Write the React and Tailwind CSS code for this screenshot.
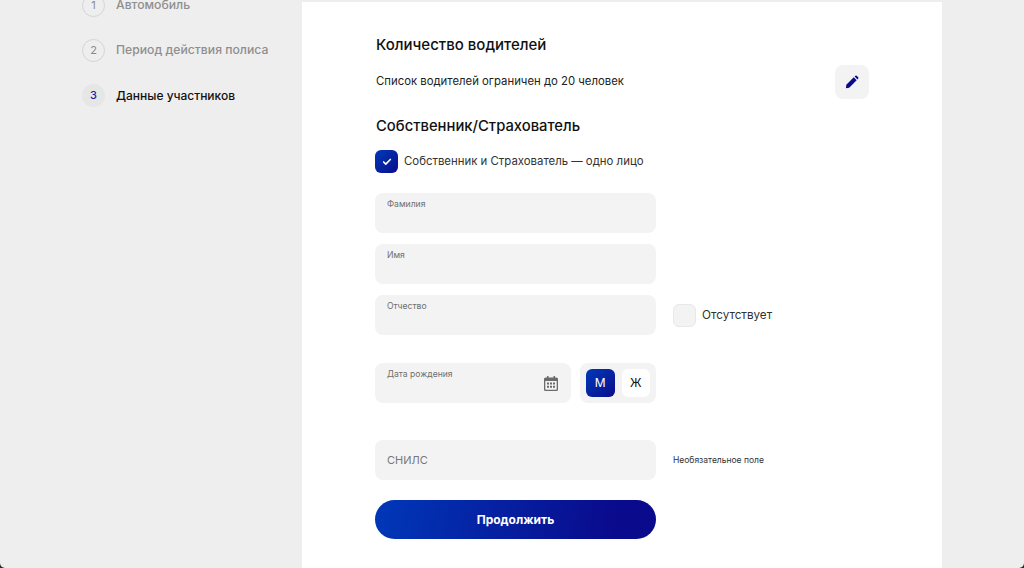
import { Check } from "lucide-react";

const steps = [
  { num: 1, label: "Автомобиль" },
  { num: 2, label: "Период действия полиса" },
  { num: 3, label: "Данные участников", active: true },
];

function Field({ label, className = "w-[281px]" }) {
  return (
    <div className={`h-10 rounded-lg bg-[#f3f3f3] px-[12px] pt-[5px] text-[8.6px] leading-[12px] text-[#6f6f6f] ${className}`}>
      {label}
    </div>
  );
}

function PencilIcon() {
  return (
    <svg width="14" height="14" viewBox="0 0 16 16" fill="#0a0a8c">
      <path d="M1.5 11.2 10 2.7l3.3 3.3-8.5 8.5-3.8.5z" />
      <path d="M11 1.7l.9-.8a1 1 0 0 1 1.4 0l1.8 1.8a1 1 0 0 1 0 1.4l-.8.9z" />
    </svg>
  );
}

function CalendarIcon() {
  return (
    <svg width="14" height="15" viewBox="0 0 14 15" fill="#6b6b6b">
      <path fillRule="evenodd" d="M3 0h1.5v1.5h5V0H11v1.5h1.5A1.5 1.5 0 0 1 14 3v10.5a1.5 1.5 0 0 1-1.5 1.5h-11A1.5 1.5 0 0 1 0 13.5V3a1.5 1.5 0 0 1 1.5-1.5H3zM1.3 5v8.2c0 .3.2.5.5.5h10.4c.3 0 .5-.2.5-.5V5z" />
      <path d="M3 6.5h2v2H3zM6 6.5h2v2H6zM9 6.5h2v2H9zM3 9.8h2v2H3zM6 9.8h2v2H6zM9 9.8h2v2H9z" />
    </svg>
  );
}

export default function App() {
  return (
    <div className="h-[568px] bg-[#2a2a2a]">
      <div className="flex h-[568px] overflow-hidden rounded-b-[5px] bg-[#eeeeee] font-['Inter',sans-serif]">
        {/* Steps */}
        <aside className="w-[302px] shrink-0 pl-[82px]">
          <div className="mt-[-6px] flex flex-col gap-[22px]">
            {steps.map((step) => (
              <div key={step.num} className="flex items-center gap-[11px]">
                <div
                  className={
                    step.active
                      ? "flex size-[23px] items-center justify-center rounded-full bg-[#e6e6e6] text-[11px] font-medium text-[#1a1aa0]"
                      : "flex size-[23px] items-center justify-center rounded-full border border-[#d4d4d4] text-[11px] text-[#8a8a8a]"
                  }
                >
                  {step.num}
                </div>
                <span
                  className={
                    step.active
                      ? "text-[12px] font-medium text-[#111111]"
                      : "text-[12.2px] font-medium text-[#8f8f8f]"
                  }
                >
                  {step.label}
                </span>
              </div>
            ))}
          </div>
        </aside>

        {/* Form */}
        <main className="mt-[2px] h-[566px] w-[640px] shrink-0 bg-white px-[73px]">
          <h2 className="mt-[34px] pl-px text-[15px] font-medium leading-[18px] text-[#111111]">
            Количество водителей
          </h2>
          <div className="mt-[11px] flex h-[34px] items-center justify-between">
            <p className="pl-px text-[11.35px] text-[#222222]">Список водителей ограничен до 20 человек</p>
            <button className="flex size-[34px] items-center justify-center rounded-lg bg-[#f3f3f3]">
              <PencilIcon />
            </button>
          </div>
          <h2 className="mt-[18px] pl-px text-[14.8px] font-medium leading-[18px] text-[#111111]">
            Собственник/Страхователь
          </h2>
          <div className="mt-[15px] flex items-center gap-[6px]">
            <div className="flex size-[23px] items-center justify-center rounded-md bg-gradient-to-br from-[#0038b8] to-[#0a0a8c]">
              <Check className="size-[10px] text-white" strokeWidth={4} />
            </div>
            <span className="text-[11.4px] text-[#333333]">Собственник и Страхователь — одно лицо</span>
          </div>

          <div className="mt-[20px] flex flex-col gap-[11px]">
            <Field label="Фамилия" />
            <Field label="Имя" />
            <div className="flex items-center gap-[17px]">
              <Field label="Отчество" />
              <div className="flex items-center gap-[6px]">
                <div className="size-[23px] rounded-md border border-[#e8e8e8] bg-[#f3f3f3]" />
                <span className="pt-px text-[11.7px] text-[#333333]">Отсутствует</span>
              </div>
            </div>
          </div>

          <div className="mt-[28px] flex w-[281px] justify-between">
            <div className="flex h-10 w-[196px] justify-between rounded-lg bg-[#f3f3f3] pl-[12px] pr-[13px] pt-[5px]">
              <span className="text-[8.6px] leading-[12px] text-[#6f6f6f]">Дата рождения</span>
              <div className="pt-[8px]">
                <CalendarIcon />
              </div>
            </div>
            <div className="flex h-10 w-[76px] items-center gap-[7px] rounded-lg bg-[#f3f3f3] px-[6px]">
              <div className="flex h-[28px] w-[29px] items-center justify-center rounded-md bg-gradient-to-br from-[#0038b8] to-[#0a0a8c] text-[12px] text-white">
                М
              </div>
              <div className="flex h-[28px] w-[29px] items-center justify-center rounded-md bg-white text-[12px] text-[#111111]">
                Ж
              </div>
            </div>
          </div>

          <div className="mt-[37px] flex items-center gap-[17px]">
            <div className="flex h-10 w-[281px] items-center rounded-lg bg-[#f3f3f3] px-[12px] text-[11px] text-[#777777]">
              СНИЛС
            </div>
            <span className="text-[8.5px] text-[#333333]">Необязательное поле</span>
          </div>

          <button className="mt-[20px] h-[39px] w-[281px] rounded-full bg-[linear-gradient(100deg,#0038b8,#0a0a8c_85%)] text-[12px] font-bold text-white">
            Продолжить
          </button>
        </main>
      </div>
    </div>
  );
}
